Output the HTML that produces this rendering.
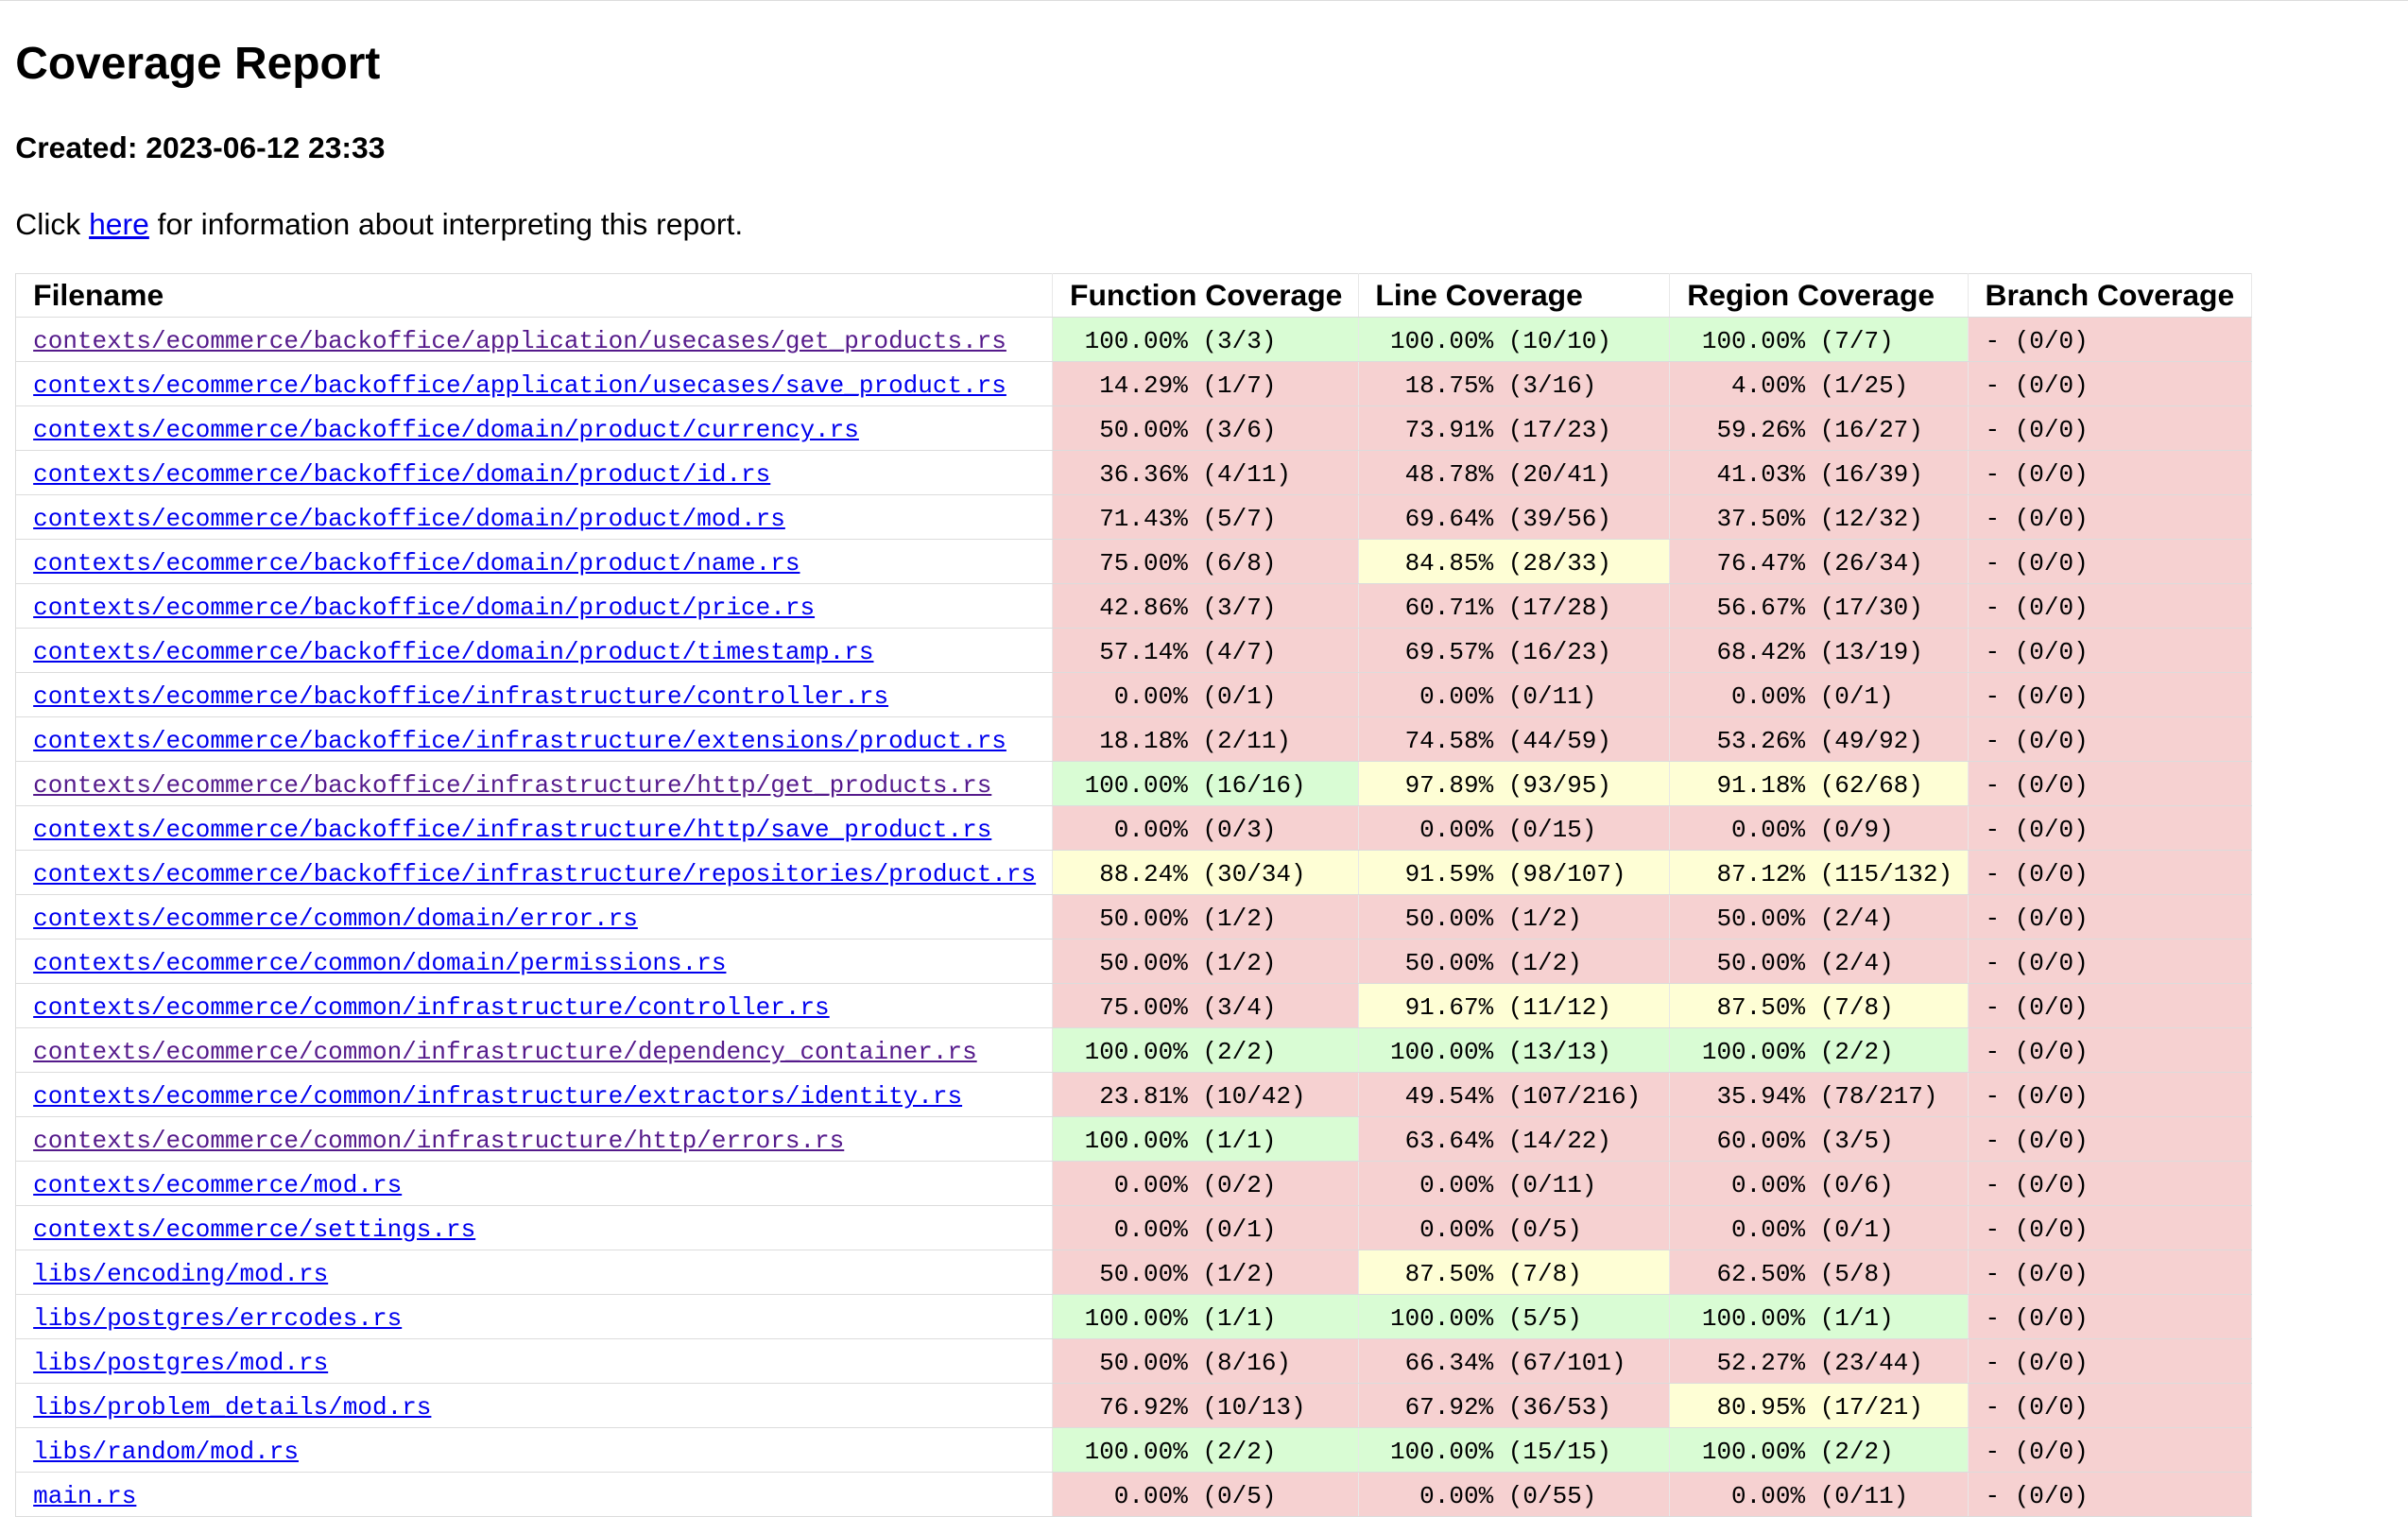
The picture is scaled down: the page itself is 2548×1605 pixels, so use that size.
<!DOCTYPE html>
<html><head><meta charset="utf-8"><style>
html{zoom:1.625}
body{margin:0;background:#fff;font-family:"Liberation Sans",Arial,sans-serif;color:#000;width:1568px;height:970px;overflow:hidden;position:relative;border-top:1px solid #dcdcdc;box-sizing:border-box}
h1{position:absolute;left:10px;top:24px;margin:0;font-size:29.5px;font-weight:bold;line-height:35px}
h4{position:absolute;left:10px;top:85px;margin:0;font-size:19.6px;font-weight:bold;line-height:22px}
p.c{position:absolute;left:10px;top:135px;margin:0;font-size:19.6px;line-height:22px}
a{color:#0000ee}
a.v{color:#551a8b}
table{position:absolute;left:10px;top:177px;border-collapse:collapse;table-layout:fixed;border:1px solid #dcdcdc}
td,th{padding:0 0 0 11px;border-bottom:1px solid #dcdcdc;border-right:1px solid #e8e8e8;text-align:left;vertical-align:middle;white-space:pre;overflow:hidden}
td{height:25.8px;padding-top:2.5px}
th{font-size:19.6px;font-weight:bold;background:#fff;height:28px}
td{font-family:"Liberation Mono",monospace;font-size:16px}
.r{background:#f6d1d1}.g{background:#d9fcd4}.y{background:#fefed5}
</style></head><body>
<h1>Coverage Report</h1>
<h4>Created: 2023-06-12 23:33</h4>
<p class="c">Click <a href="#">here</a> for information about interpreting this report.</p>
<table>
<colgroup><col style="width:675px"><col style="width:199px"><col style="width:203px"><col style="width:194px"><col style="width:185px"></colgroup>
<tr><th>Filename</th><th>Function Coverage</th><th>Line Coverage</th><th>Region Coverage</th><th>Branch Coverage</th></tr>
<tr><td><a class="v" href="#">contexts/ecommerce/backoffice/application/usecases/get_products.rs</a></td><td class="g"> 100.00% (3/3)</td><td class="g"> 100.00% (10/10)</td><td class="g"> 100.00% (7/7)</td><td class="r">- (0/0)</td></tr>
<tr><td><a href="#">contexts/ecommerce/backoffice/application/usecases/save_product.rs</a></td><td class="r">  14.29% (1/7)</td><td class="r">  18.75% (3/16)</td><td class="r">   4.00% (1/25)</td><td class="r">- (0/0)</td></tr>
<tr><td><a href="#">contexts/ecommerce/backoffice/domain/product/currency.rs</a></td><td class="r">  50.00% (3/6)</td><td class="r">  73.91% (17/23)</td><td class="r">  59.26% (16/27)</td><td class="r">- (0/0)</td></tr>
<tr><td><a href="#">contexts/ecommerce/backoffice/domain/product/id.rs</a></td><td class="r">  36.36% (4/11)</td><td class="r">  48.78% (20/41)</td><td class="r">  41.03% (16/39)</td><td class="r">- (0/0)</td></tr>
<tr><td><a href="#">contexts/ecommerce/backoffice/domain/product/mod.rs</a></td><td class="r">  71.43% (5/7)</td><td class="r">  69.64% (39/56)</td><td class="r">  37.50% (12/32)</td><td class="r">- (0/0)</td></tr>
<tr><td><a href="#">contexts/ecommerce/backoffice/domain/product/name.rs</a></td><td class="r">  75.00% (6/8)</td><td class="y">  84.85% (28/33)</td><td class="r">  76.47% (26/34)</td><td class="r">- (0/0)</td></tr>
<tr><td><a href="#">contexts/ecommerce/backoffice/domain/product/price.rs</a></td><td class="r">  42.86% (3/7)</td><td class="r">  60.71% (17/28)</td><td class="r">  56.67% (17/30)</td><td class="r">- (0/0)</td></tr>
<tr><td><a href="#">contexts/ecommerce/backoffice/domain/product/timestamp.rs</a></td><td class="r">  57.14% (4/7)</td><td class="r">  69.57% (16/23)</td><td class="r">  68.42% (13/19)</td><td class="r">- (0/0)</td></tr>
<tr><td><a href="#">contexts/ecommerce/backoffice/infrastructure/controller.rs</a></td><td class="r">   0.00% (0/1)</td><td class="r">   0.00% (0/11)</td><td class="r">   0.00% (0/1)</td><td class="r">- (0/0)</td></tr>
<tr><td><a href="#">contexts/ecommerce/backoffice/infrastructure/extensions/product.rs</a></td><td class="r">  18.18% (2/11)</td><td class="r">  74.58% (44/59)</td><td class="r">  53.26% (49/92)</td><td class="r">- (0/0)</td></tr>
<tr><td><a class="v" href="#">contexts/ecommerce/backoffice/infrastructure/http/get_products.rs</a></td><td class="g"> 100.00% (16/16)</td><td class="y">  97.89% (93/95)</td><td class="y">  91.18% (62/68)</td><td class="r">- (0/0)</td></tr>
<tr><td><a href="#">contexts/ecommerce/backoffice/infrastructure/http/save_product.rs</a></td><td class="r">   0.00% (0/3)</td><td class="r">   0.00% (0/15)</td><td class="r">   0.00% (0/9)</td><td class="r">- (0/0)</td></tr>
<tr><td><a href="#">contexts/ecommerce/backoffice/infrastructure/repositories/product.rs</a></td><td class="y">  88.24% (30/34)</td><td class="y">  91.59% (98/107)</td><td class="y">  87.12% (115/132)</td><td class="r">- (0/0)</td></tr>
<tr><td><a href="#">contexts/ecommerce/common/domain/error.rs</a></td><td class="r">  50.00% (1/2)</td><td class="r">  50.00% (1/2)</td><td class="r">  50.00% (2/4)</td><td class="r">- (0/0)</td></tr>
<tr><td><a href="#">contexts/ecommerce/common/domain/permissions.rs</a></td><td class="r">  50.00% (1/2)</td><td class="r">  50.00% (1/2)</td><td class="r">  50.00% (2/4)</td><td class="r">- (0/0)</td></tr>
<tr><td><a href="#">contexts/ecommerce/common/infrastructure/controller.rs</a></td><td class="r">  75.00% (3/4)</td><td class="y">  91.67% (11/12)</td><td class="y">  87.50% (7/8)</td><td class="r">- (0/0)</td></tr>
<tr><td><a class="v" href="#">contexts/ecommerce/common/infrastructure/dependency_container.rs</a></td><td class="g"> 100.00% (2/2)</td><td class="g"> 100.00% (13/13)</td><td class="g"> 100.00% (2/2)</td><td class="r">- (0/0)</td></tr>
<tr><td><a href="#">contexts/ecommerce/common/infrastructure/extractors/identity.rs</a></td><td class="r">  23.81% (10/42)</td><td class="r">  49.54% (107/216)</td><td class="r">  35.94% (78/217)</td><td class="r">- (0/0)</td></tr>
<tr><td><a class="v" href="#">contexts/ecommerce/common/infrastructure/http/errors.rs</a></td><td class="g"> 100.00% (1/1)</td><td class="r">  63.64% (14/22)</td><td class="r">  60.00% (3/5)</td><td class="r">- (0/0)</td></tr>
<tr><td><a href="#">contexts/ecommerce/mod.rs</a></td><td class="r">   0.00% (0/2)</td><td class="r">   0.00% (0/11)</td><td class="r">   0.00% (0/6)</td><td class="r">- (0/0)</td></tr>
<tr><td><a href="#">contexts/ecommerce/settings.rs</a></td><td class="r">   0.00% (0/1)</td><td class="r">   0.00% (0/5)</td><td class="r">   0.00% (0/1)</td><td class="r">- (0/0)</td></tr>
<tr><td><a href="#">libs/encoding/mod.rs</a></td><td class="r">  50.00% (1/2)</td><td class="y">  87.50% (7/8)</td><td class="r">  62.50% (5/8)</td><td class="r">- (0/0)</td></tr>
<tr><td><a href="#">libs/postgres/errcodes.rs</a></td><td class="g"> 100.00% (1/1)</td><td class="g"> 100.00% (5/5)</td><td class="g"> 100.00% (1/1)</td><td class="r">- (0/0)</td></tr>
<tr><td><a href="#">libs/postgres/mod.rs</a></td><td class="r">  50.00% (8/16)</td><td class="r">  66.34% (67/101)</td><td class="r">  52.27% (23/44)</td><td class="r">- (0/0)</td></tr>
<tr><td><a href="#">libs/problem_details/mod.rs</a></td><td class="r">  76.92% (10/13)</td><td class="r">  67.92% (36/53)</td><td class="y">  80.95% (17/21)</td><td class="r">- (0/0)</td></tr>
<tr><td><a href="#">libs/random/mod.rs</a></td><td class="g"> 100.00% (2/2)</td><td class="g"> 100.00% (15/15)</td><td class="g"> 100.00% (2/2)</td><td class="r">- (0/0)</td></tr>
<tr><td><a href="#">main.rs</a></td><td class="r">   0.00% (0/5)</td><td class="r">   0.00% (0/55)</td><td class="r">   0.00% (0/11)</td><td class="r">- (0/0)</td></tr>
</table>
</body></html>
